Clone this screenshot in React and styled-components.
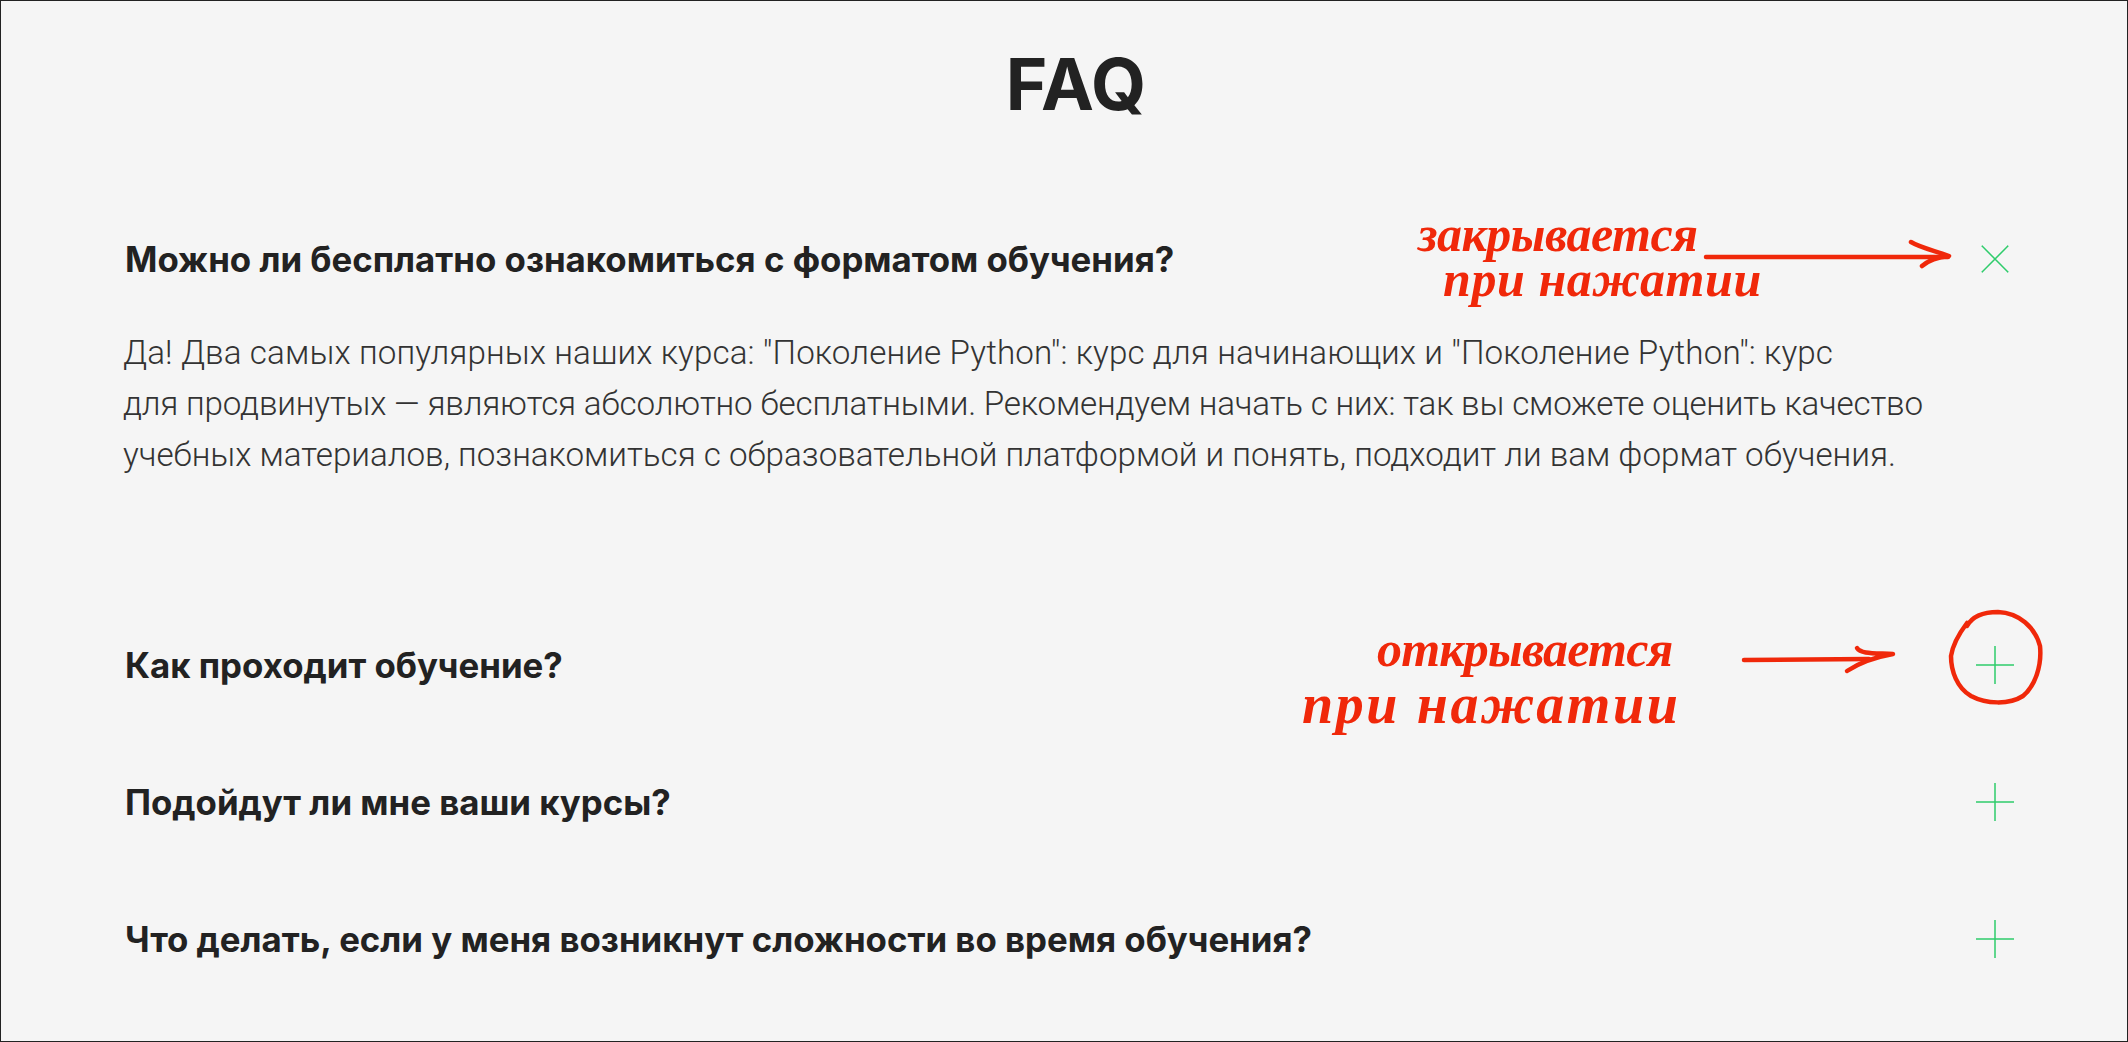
import React from 'react';
import styled, { createGlobalStyle } from 'styled-components';

const GlobalStyle = createGlobalStyle`
  html, body {
    margin: 0;
    padding: 0;
    background: #f5f5f5;
  }
`;

const Page = styled.div`
  position: relative;
  box-sizing: border-box;
  width: 2128px;
  height: 1042px;
  border: 1px solid #222;
  background: #f5f5f5;
  overflow: hidden;
  font-family: Inter, "Noto Sans", sans-serif;
  color: #222;
`;

const Title = styled.h1`
  margin: 0;
  padding: 43px 0 0 24px;
  text-align: center;
  font-size: 71px;
  line-height: 80px;
  font-weight: 700;
`;

const List = styled.div`
  display: flex;
  flex-direction: column;
  padding: 66px 113px 0 124px;
`;

const Item = styled.div`
  display: flex;
  flex-direction: column;
`;

const QuestionRow = styled.div`
  display: flex;
  align-items: center;
  justify-content: space-between;
  height: 137px;
`;

const Question = styled.div`
  font-size: 34.8px;
  line-height: 44px;
  font-weight: 700;
  padding-top: 1px;
`;

const Answer = styled.div`
  margin: 0 0 116px -2px;
  font-family: Roboto, sans-serif;
  font-size: 33.2px;
  line-height: 51px;
  font-weight: 300;
  color: #333;
  white-space: nowrap;
`;

const AnswerLine = styled.div`
  letter-spacing: ${props => props.$tracking}px;
`;

const Toggle = styled.svg`
  display: block;
  width: 38px;
  height: 38px;
  flex: none;
  transform: rotate(${props => (props.$open ? 45 : 0)}deg);
`;

const Note = styled.span`
  position: absolute;
  left: ${props => props.$x}px;
  top: ${props => props.$y}px;
  font-family: "Liberation Serif", serif;
  font-style: italic;
  font-weight: 700;
  font-size: ${props => props.$size}px;
  line-height: 44px;
  letter-spacing: ${props => props.$spacing}px;
  color: #f0280a;
  white-space: nowrap;
`;

const Strokes = styled.svg`
  position: absolute;
  left: 0;
  top: 0;
  width: 2128px;
  height: 1042px;
  pointer-events: none;
`;

const faq = [
  {
    question: 'Можно ли бесплатно ознакомиться с форматом обучения?',
    open: true,
    answer: [
      { text: 'Да! Два самых популярных наших курса: "Поколение Python": курс для начинающих и "Поколение Python": курс', tracking: 0.12 },
      { text: 'для продвинутых — являются абсолютно бесплатными. Рекомендуем начать с них: так вы сможете оценить качество', tracking: -0.18 },
      { text: 'учебных материалов, познакомиться с образовательной платформой и понять, подходит ли вам формат обучения.', tracking: 0 }
    ]
  },
  { question: 'Как проходит обучение?' },
  { question: 'Подойдут ли мне ваши курсы?' },
  { question: 'Что делать, если у меня возникнут сложности во время обучения?' }
];

const notes = [
  { text: 'закрывается', x: 1417, y: 211, size: 50, spacing: -0.5 },
  { text: 'при нажатии', x: 1442, y: 256, size: 50, spacing: 0.6 },
  { text: 'открывается', x: 1376, y: 626, size: 50, spacing: -0.8 },
  { text: 'при нажатии', x: 1301, y: 681, size: 56, spacing: 2.6 }
];

const PlusIcon = ({ open }) => (
  <Toggle viewBox="0 0 38 38" $open={open}>
    <path d="M19 0V38M0 19H38" stroke="#2fcc6b" strokeWidth="1.5" fill="none" />
  </Toggle>
);

const App = () => (
  <Page>
    <GlobalStyle />
    <Title>FAQ</Title>
    <List>
      {faq.map(item => (
        <Item key={item.question}>
          <QuestionRow>
            <Question>{item.question}</Question>
            <PlusIcon open={item.open} />
          </QuestionRow>
          {item.answer && (
            <Answer>
              {item.answer.map(line => (
                <AnswerLine key={line.text} $tracking={line.tracking}>
                  {line.text}
                </AnswerLine>
              ))}
            </Answer>
          )}
        </Item>
      ))}
    </List>
    {notes.map(note => (
      <Note key={note.x} $x={note.x} $y={note.y} $size={note.size} $spacing={note.spacing}>
        {note.text}
      </Note>
    ))}
    <Strokes viewBox="0 0 2128 1042" fill="none" stroke="#f0280a" strokeWidth="4.5" strokeLinecap="round" strokeLinejoin="round">
      <path d="M1705 256H1947" />
      <path d="M1910 241C1920 247 1935 250 1948 255C1938 256 1928 259 1921 265" />
      <path d="M1743 659L1868 658" />
      <path d="M1856 647C1860 653 1872 652 1892 653C1875 656 1858 662 1846 670" />
      <path d="M1966 625C1972 614 1985 611 1997 611C2018 612 2034 626 2039 645C2041 665 2034 685 2022 695C2008 704 1985 703 1970 695C1956 687 1950 670 1950 655C1952 642 1960 630 1966 622" />
    </Strokes>
  </Page>
);

export default App;
